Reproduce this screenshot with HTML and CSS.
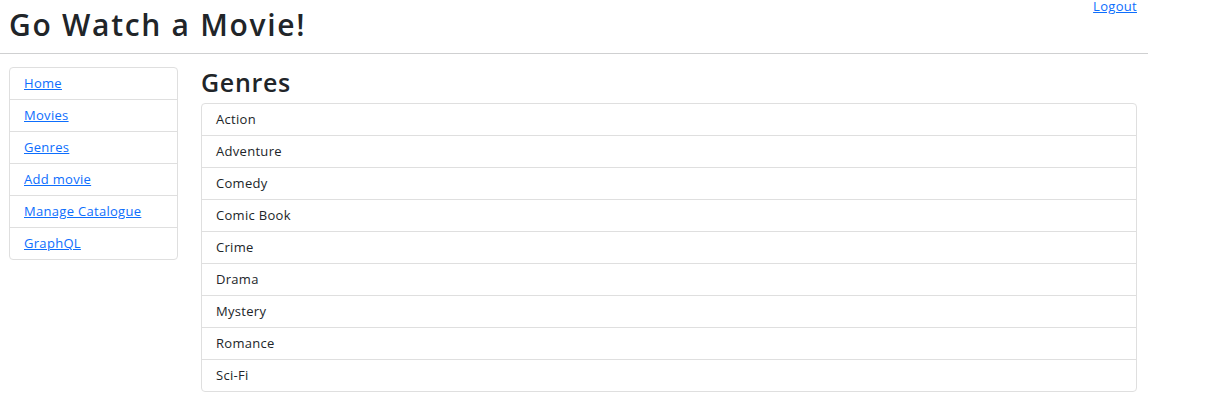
FILE: index.html
```html
<!DOCTYPE html>
<html lang="en">
<head>
<meta charset="utf-8">
<title>Go Watch a Movie!</title>
<link rel="stylesheet" href="styles.css">
</head>
<body>
<div class="page">
  <header class="topbar">
    <h1 class="title">Go Watch a Movie!</h1>
    <div class="account"><a href="#" class="link">Logout</a></div>
  </header>
  <div class="layout">
    <nav class="sidebar">
      <div class="list-group">
        <div class="list-item"><a href="#" class="link">Home</a></div>
        <div class="list-item"><a href="#" class="link">Movies</a></div>
        <div class="list-item"><a href="#" class="link">Genres</a></div>
        <div class="list-item"><a href="#" class="link">Add movie</a></div>
        <div class="list-item"><a href="#" class="link">Manage Catalogue</a></div>
        <div class="list-item"><a href="#" class="link">GraphQL</a></div>
      </div>
    </nav>
    <main class="content">
      <h2 class="section-title">Genres</h2>
      <div class="list-group">
        <div class="list-item">Action</div>
        <div class="list-item">Adventure</div>
        <div class="list-item">Comedy</div>
        <div class="list-item">Comic Book</div>
        <div class="list-item">Crime</div>
        <div class="list-item">Drama</div>
        <div class="list-item">Mystery</div>
        <div class="list-item">Romance</div>
        <div class="list-item">Sci-Fi</div>
      </div>
    </main>
  </div>
</div>
</body>
</html>
```

FILE: styles.css
```css
* { box-sizing: border-box; }

body {
  margin: 0;
  background: #fff;
  color: #212529;
  font-family: "Open Sans", "Noto Sans", sans-serif;
  font-size: 13px;
}

.page {
  width: 1148px;
}

.topbar {
  display: flex;
  justify-content: space-between;
  align-items: flex-start;
  height: 54px;
  padding: 0 11px 0 9px;
  border-bottom: 1px solid #cfd0d1;
}

.title {
  margin: 7px 0 0;
  font-size: 30px;
  line-height: 1.2;
  font-weight: 600;
  letter-spacing: 1.7px;
  color: #212529;
}

.account {
  line-height: 12px;
  letter-spacing: 0.3px;
}

.link {
  color: #0d6efd;
  text-decoration: underline;
}

.layout {
  display: flex;
  gap: 23px;
  padding: 13px 11px 0 9px;
}

.sidebar {
  width: 169px;
  flex: none;
}

.content {
  flex: 1;
}

.section-title {
  margin: 0 0 6px;
  font-size: 25px;
  line-height: 30px;
  font-weight: 600;
  letter-spacing: 0.7px;
  color: #212529;
}

.list-group {
  border: 1px solid #dfdfdf;
  border-radius: 4px;
}

.list-item {
  padding: 6px 14px;
  line-height: 19px;
  font-size: 13px;
  letter-spacing: 0.3px;
}

.list-item + .list-item {
  border-top: 1px solid #dfdfdf;
}
```
